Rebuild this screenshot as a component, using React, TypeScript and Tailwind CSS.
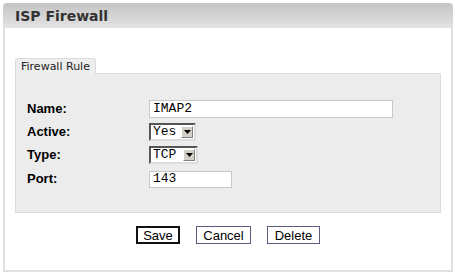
const labelCls = "block w-[133px] shrink-0 pl-[11px] font-['Liberation_Sans',Arial,sans-serif] font-bold text-[13px] leading-[18px] text-black";

const Select = ({ value, width }: { value: string; width: string }) => {
  return (
    <div className={`flex h-[18px] items-stretch bg-white border-2 border-t-[#555] border-l-[#555] border-b-[#ddd] border-r-[#ddd] ${width}`}>
      <span className="flex-1 pl-[2px] font-['Liberation_Mono','Courier_New',monospace] text-[13px] leading-[14px] text-black">
        {value}
      </span>
      <span className="my-[1px] mr-[1px] flex w-[12px] items-center justify-center bg-[#d4d0c8] border border-t-white border-l-white border-b-[#808080] border-r-[#808080]">
        <svg width="7" height="4" viewBox="0 0 7 4">
          <path d="M0 0h7L3.5 4z" fill="#000" />
        </svg>
      </span>
    </div>
  );
};

const App = () => {
  return (
    <div className="w-[455px] h-[275px] bg-white pt-[3px] pl-[3px]">
      <div className="w-[450px] flex flex-col">
        {/* header */}
        <div className="h-[25px] rounded-t-[4px] bg-gradient-to-b from-[#c4c4c4] to-[#e3e3e3] pl-[12px] flex items-center">
          <h1 className="font-['DejaVu_Sans',Verdana,sans-serif] font-bold text-[14px] leading-[18px] text-[#333]">
            ISP Firewall
          </h1>
        </div>

        {/* body */}
        <div className="h-[244px] border-x-2 border-b-2 border-[#e0e0e0] px-[10px] pt-[30px]">
          <div className="w-fit h-[16px] -mb-px relative px-[5px] bg-[#eeeeee] border border-b-0 border-[#dcdcdc] rounded-t-[3px] font-['DejaVu_Sans',Verdana,sans-serif] text-[11px] leading-[15px] text-[#222]">
            Firewall Rule
          </div>
          <div className="h-[140px] bg-[#ececec] border border-[#dcdcdc] pt-[26px] flex flex-col gap-[5px]">
            <div className="flex items-center">
              <span className={labelCls}>Name:</span>
              <input
                type="text"
                defaultValue="IMAP2"
                className="w-[244px] h-[18px] bg-white border border-[#c8c8c8] px-[3px] font-['Liberation_Mono','Courier_New',monospace] text-[13px] text-black outline-none"
              />
            </div>
            <div className="flex items-center">
              <span className={labelCls}>Active:</span>
              <Select value="Yes" width="w-[47px]" />
            </div>
            <div className="flex items-center">
              <span className={labelCls}>Type:</span>
              <Select value="TCP" width="w-[49px]" />
            </div>
            <div className="flex items-center mt-[1px]">
              <span className={labelCls}>Port:</span>
              <input
                type="text"
                defaultValue="143"
                className="w-[83px] h-[17px] bg-white border border-[#c8c8c8] px-[3px] font-['Liberation_Mono','Courier_New',monospace] text-[13px] text-black outline-none"
              />
            </div>
          </div>

          <div className="mt-[13px] flex justify-center gap-[16px] font-['Liberation_Sans',Arial,sans-serif] text-[13px] text-black">
            <button className="w-[44px] h-[18px] bg-white border-2 border-[#111] leading-[13px]">Save</button>
            <button className="w-[55px] h-[18px] bg-white border border-[#5e5a80] leading-[15px]">Cancel</button>
            <button className="w-[53px] h-[18px] bg-white border border-[#5e5a80] leading-[15px]">Delete</button>
          </div>
        </div>
      </div>
    </div>
  );
};

export default App;
